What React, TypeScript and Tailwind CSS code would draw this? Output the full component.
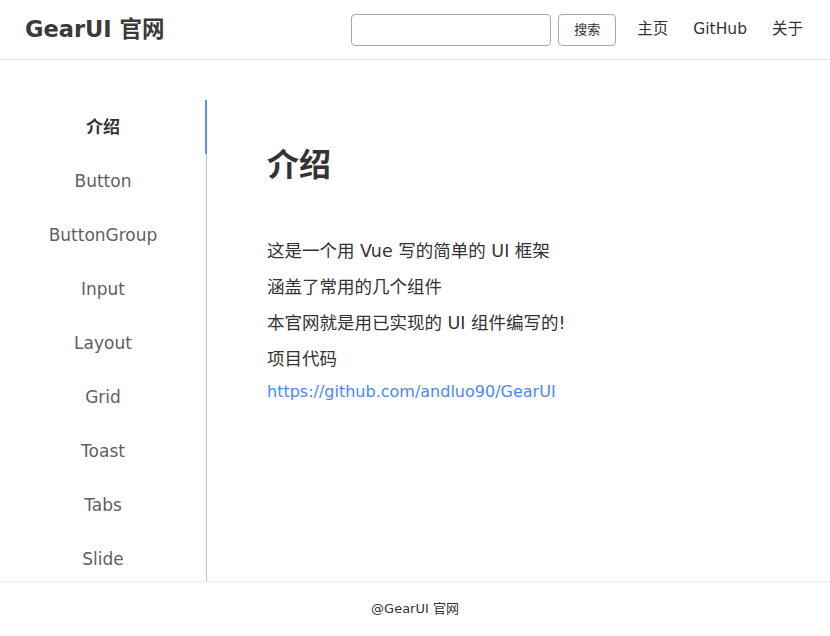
import { useState } from "react";

const MENU = [
  "介绍",
  "Button",
  "ButtonGroup",
  "Input",
  "Layout",
  "Grid",
  "Toast",
  "Tabs",
  "Slide",
];

const fontStack = "font-['DejaVu_Sans','Noto_Sans_CJK_SC',sans-serif]";

export default function App() {
  const [active, setActive] = useState("介绍");
  const [query, setQuery] = useState("");

  return (
    <div className={`h-[636px] w-full flex flex-col bg-white text-[#333] ${fontStack}`}>
      {/* Header */}
      <header className="h-[60px] shrink-0 border-b border-[#ececec] flex items-center justify-between pl-[25px] pr-[27px]">
        <div className="text-[22.5px] font-bold text-[#3a3a3a] leading-none">GearUI 官网</div>
        <div className="flex items-center">
          <input
            value={query}
            onChange={(e) => setQuery(e.target.value)}
            className="w-[200px] h-[32px] border border-[#a9a9a9] rounded-[4px] px-2 text-sm outline-none"
          />
          <button className="ml-[7px] w-[58px] h-[32px] border border-[#a9a9a9] rounded-[4px] text-[13px] text-[#333] bg-white">
            搜索
          </button>
          <nav className="flex items-center gap-[25px] ml-[21px] text-[15.5px] text-[#333]">
            <a href="#">主页</a>
            <a href="#">GitHub</a>
            <a href="#">关于</a>
          </nav>
        </div>
      </header>

      {/* Main */}
      <main className="flex-1 flex overflow-hidden">
        <aside className="w-[207px] shrink-0">
          <ul className="mt-10 border-r border-[#c4c4c4]">
            {MENU.map((item) => (
              <li
                key={item}
                onClick={() => setActive(item)}
                className={`relative h-[54px] pt-[2px] flex items-center justify-center cursor-pointer text-[17px] ${
                  active === item ? "font-bold text-[#333]" : "text-[#5f5f5f]"
                }`}
              >
                {item}
                {active === item && (
                  <span className="absolute right-[-1px] top-0 bottom-0 w-[2px] bg-[#5b8ff9]" />
                )}
              </li>
            ))}
          </ul>
        </aside>

        <section className="flex-1 pl-[60px] pt-[81px]">
          <h1 className="text-[32px] font-bold leading-[48px] text-[#333]">介绍</h1>
          <div className="mt-[44px] text-[17.5px] leading-[36px] text-[#333]">
            <p>这是一个用 Vue 写的简单的 UI 框架</p>
            <p>涵盖了常用的几个组件</p>
            <p>本官网就是用已实现的 UI 组件编写的!</p>
            <p>项目代码</p>
            <a href="#" className="block -mt-[3px] text-[16px] text-[#4a88f2]">
              https://github.com/andluo90/GearUI
            </a>
          </div>
        </section>
      </main>

      {/* Footer */}
      <footer className="h-[55px] shrink-0 border-t border-[#ececec] flex items-center justify-center text-[13px] text-[#333]">
        @GearUI 官网
      </footer>
    </div>
  );
}
